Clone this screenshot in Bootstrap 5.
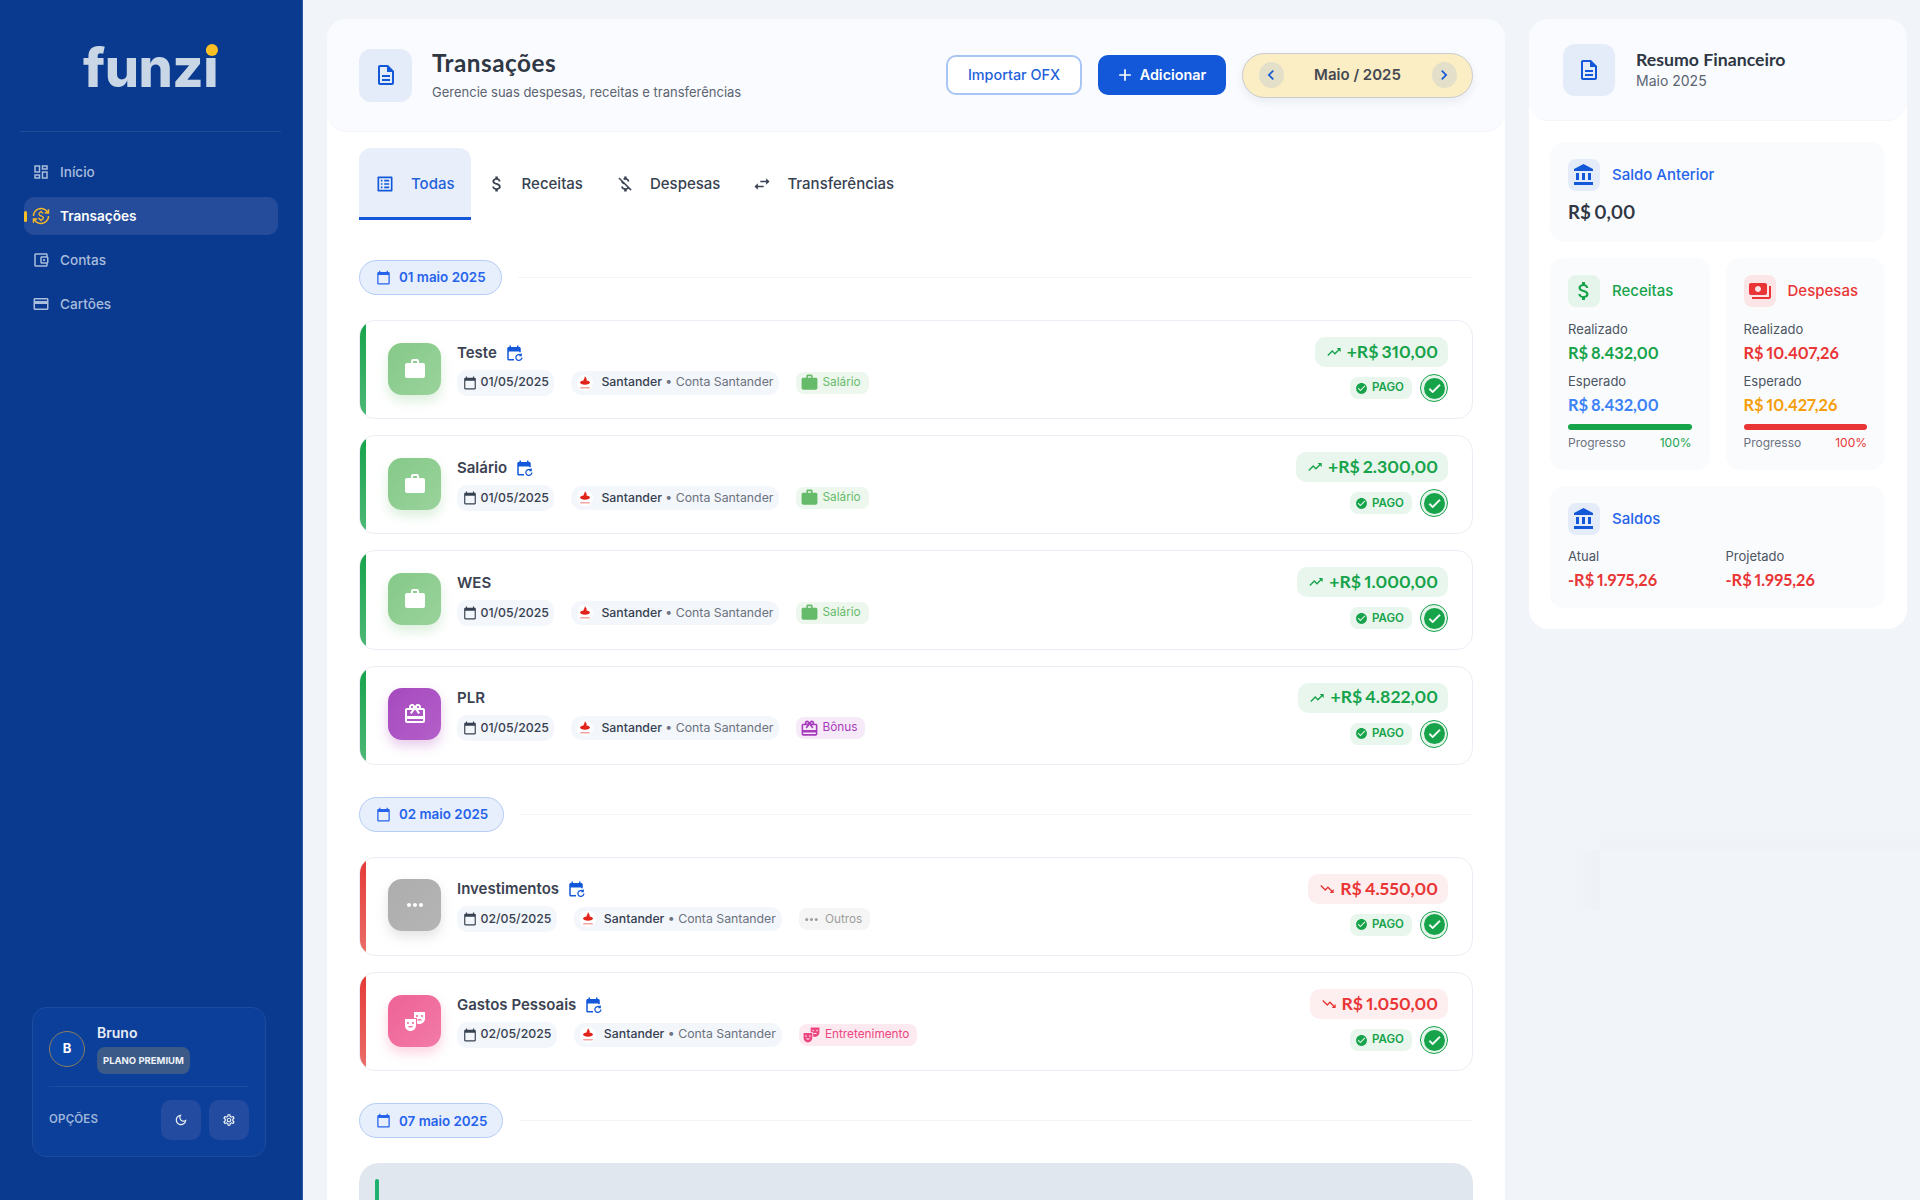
<!DOCTYPE html>
<html lang="pt-BR">
<head>
<meta charset="utf-8">
<title>Funzi - Transações</title>
<link href="https://cdn.jsdelivr.net/npm/bootstrap@5.3.0/dist/css/bootstrap.min.css" rel="stylesheet">
<style>
html,body{height:100%;overflow:hidden}
body{background:#f1f4f9;font-family:Inter,"Liberation Sans",sans-serif;color:#374151;position:relative}
.hfont{font-family:Lato,Inter,sans-serif;font-variant-numeric:proportional-nums;word-spacing:-1.2px}
.ic{fill:currentColor;flex:none;display:block}
.shell{height:1200px}
.side{width:303px;flex:none;background:#0a3a8f;border-right:1px solid #2a5aa6;padding:0 24px 43px}
.logo-wrap{height:132px;padding-top:33px;border-bottom:1px solid rgba(255,255,255,.09);margin-left:-4px;margin-right:-3px}
.logo-txt{font-size:54px;font-weight:800;line-height:70px;color:#c9d6e6;letter-spacing:-.5px;position:relative;display:inline-block}
.logo-dot{position:absolute;right:0;top:11px;width:12px;height:12px;border-radius:50%;background:#fbbf24}
.side-nav{margin-top:21px;gap:6px}
.sn-item{height:38px;padding:0 0 0 8px;gap:10px;border-radius:10px;color:#a9bddd;font-size:13.6px;font-weight:500;text-decoration:none;position:relative}
.sn-item.on{background:#244c9b;color:#fff;font-weight:600}
.sn-item.on .ic{color:#f5b72a}
.sn-bar{position:absolute;left:0;top:14px;width:3px;height:11px;background:#fbbf24;border-radius:2px}
.ucard{margin:auto 12px 0 8px;background:#0c3f99;border:1px solid #1c4b9f;border-radius:14px;padding:16px}
.uavatar{width:36px;height:36px;border-radius:50%;background:#0d47a8;border:1px solid #8b7f5e;color:#fff;font-weight:700;font-size:13px}
.uname{font-size:14px;font-weight:600;color:#e8edf5;line-height:17px}
.ubadge{display:inline-block;background:#3b5a87;color:#eef2f8;border-radius:8px;font-size:9.5px;font-weight:700;height:27px;line-height:27px;padding:0 6px;margin-top:6px}
.uline{border-top:1px solid #1c4b9f;margin:12px 0 13px}
.uopt{font-size:11.5px;font-weight:600;color:#9eb6da;letter-spacing:.2px}
.ubtn{width:40px;height:40px;border-radius:10px;background:#234ca0;border:0;color:#eef2f8;padding:0}
.content{padding:19px 13px 0 24px;gap:24px;min-width:0}
.panel-main{width:1178px;flex:none;background:#fff;border-radius:20px 20px 0 0;min-height:1181px}
.phead{background:#fafbfe;border-radius:20px;height:113px;padding:0 32px;gap:20px;border-bottom:1px solid #f3f5f9}
.ptile{width:53px;height:53px;border-radius:12px;background:#e5ecf9;color:#1258d8}
.ptitle{font-size:24.3px;letter-spacing:.5px;font-weight:700;color:#2f3744;line-height:28px}
.psub{font-size:13px;color:#5b6472;line-height:18px;margin-top:6px}
.b-ofx{width:136px;height:40px;border:2px solid #a9c5f5;border-radius:10px;color:#1f62da;background:#fff;font-size:14.4px;font-weight:500;padding:0}
.b-add{width:128px;height:40px;border:0;border-radius:10px;background:#1258d8;color:#fff;font-size:14.4px;font-weight:600;padding:0 3px 0 0;gap:5px}
.mpill{width:231px;height:45px;border-radius:24px;background:#fbeec4;border:1.5px solid #cacccd;box-shadow:0 4px 10px rgba(15,40,90,.07);padding:0 15.5px}
.mbtn{width:25px;height:26px;border-radius:50%;background:#e3dfc8;color:#1258d8;border:0;padding:0}
.mtxt{font-size:15px;font-weight:600;color:#454852}
.tabsx{padding:16px 32px 0;flex-wrap:nowrap}
.tabx{height:72px;padding:3px 16px 0;gap:15px;font-size:15px;font-weight:500;color:#374151;border-radius:12px 12px 0 0;border-bottom:3px solid transparent;text-decoration:none}
.tabx.on{gap:16px;background:#e9effa;color:#1f62da;border-bottom-color:#1258d8}
.tabx.on .ic{color:#1258d8}
.list{padding:40px 32px 0}
.dhead{gap:16px;margin-bottom:25px}
.dpill{height:35px;padding:0 15px 0 16px;gap:8px;border:1.5px solid #b5cdf5;background:#e7eefc;border-radius:18px;color:#2563eb;font-size:13.4px;font-weight:600;white-space:nowrap}
.dline{height:1.5px;background:#f2f4f8;flex:1}
.rows{gap:16px;margin-bottom:32px}
.trow{height:99.2px;border:1.5px solid #eaeef4;border-radius:16px;padding:0 24px 0 28px;background:#fff;position:relative;overflow:hidden}
.tbar{position:absolute;left:0;top:0;bottom:0;width:6px}
.g-bar{background:linear-gradient(#16a34a,#4fb877)}
.r-bar{background:linear-gradient(#e53935,#ea6f6a)}
.ttile{width:53px;height:52px;border-radius:14px;color:#fff;margin:0 16px 2px 0;flex:none}
.tt-g{background:linear-gradient(135deg,#85c988,#9ad39c);box-shadow:0 6px 12px rgba(129,199,132,.28)}
.tt-p{background:linear-gradient(135deg,#a64abf,#b45fc9);box-shadow:0 6px 12px rgba(171,71,188,.28)}
.tt-x{background:linear-gradient(135deg,#adadad,#b5b5b5);box-shadow:0 6px 12px rgba(158,158,158,.28)}
.tt-k{background:linear-gradient(135deg,#ee6295,#f27ba8);box-shadow:0 6px 12px rgba(240,98,146,.28)}
.tname{font-size:15px;font-weight:600;color:#3b4252;line-height:22px;gap:8px;margin-top:-2px;margin-bottom:6px}
.tname .ic{color:#1258d8}
.chips{gap:17px}
.cdate{height:26px;padding:0 5.5px;gap:4px;border-radius:10px;background:#f3f6fa;font-size:12.3px;font-weight:500;color:#374151}
.cacct{height:24px;padding:0 6px;border-radius:11px;background:#f3f6fa;font-size:12.3px;white-space:nowrap}
.clogo{width:16px;height:16px;border-radius:50%;background:#fff;margin-right:8px;flex:none}
.cacct b{font-weight:500;color:#374151}
.cacct span{color:#6b7280}
.ccat{height:22px;padding:0 8px 0 3.5px;gap:3.5px;border-radius:8px;font-size:11.8px}
.cc-g{background:#edf7ee;color:#66bb6a}
.cc-p{background:#f6eaf9;color:#a63bbb}
.cc-x{background:#f5f5f5;color:#9e9e9e}
.cc-k{background:#fdeaf1;color:#ec4580}
.tval{height:30px;border-radius:10px;padding:0 10px 0 11px;gap:5px;font-size:17.6px;font-weight:700;white-space:nowrap}
.tv-g{background:#e9f6ee;color:#16a34a}
.tv-r{background:#fdeeef;color:#e93535}
.tstat{margin-top:7px;gap:8px}
.pago{width:62px;height:22px;border-radius:8px;background:#e8f6ed;color:#16a34a;font-size:11.5px;font-weight:600;gap:4px;padding-left:5px}
.chk{width:28px;height:28px;border-radius:50%;border:1.5px solid #16a34a;background:#e6f5eb;padding:2.5px}
.chk i{display:flex;width:100%;height:100%;border-radius:50%;background:#16a34a;color:#fff;align-items:center;justify-content:center}
.ghost{height:60px;background:#e1e7ef;border-radius:20px 20px 0 0;padding:16px 0 0 16px}
.ghost i{display:block;width:4px;height:40px;border-radius:3px;background:#1eb06e}
.panel-side{width:378px;flex:none;background:#fff;border-radius:20px;height:610px}
.shead{background:#fafbfe;border-radius:20px;height:102px;padding:0 34px;gap:21px;border-bottom:1px solid #f3f5f9}
.stile{width:52px;height:52px;border-radius:12px;background:#e5ecf9;color:#1258d8}
.stitle{font-size:17.7px;font-weight:700;color:#2f3744;line-height:22px;word-spacing:0}
.ssub{font-size:14px;color:#5b6472;line-height:20px}
.sbody{padding:21px 22px 21px 21px;gap:16px}
.scard{background:#fafbfd;border-radius:14px;padding:17px 18px 18px}
.sic{width:32px;height:32px;border-radius:8px;flex:none}
.si-b{background:#e5ecf9;color:#1258d8}
.si-g{background:#e6f5eb;color:#16a34a}
.si-r{background:#fbe5e7;color:#e93535}
.slabel{font-size:15px;font-weight:500;gap:12px}
.sl-b{color:#2563eb}.sl-g{color:#16a34a}.sl-r{color:#e93535}
.szero{font-size:18.6px;font-weight:700;color:#2f3744;line-height:24px;margin-top:9px}
.skey{font-size:13px;color:#4b5563;line-height:20px}
.skey.k1{margin-top:12px}.skey.k2{margin-top:8px}
.sval{font-size:16.4px;font-weight:700;line-height:20px;margin-top:4px;white-space:nowrap}
.c-g{color:#16a34a}.c-r{color:#e93535}.c-b{color:#3b82f6}.c-o{color:#f59e0b}
.sbarx{height:6px;margin-top:9px;border-radius:3px}
.sbarx.bg1{background:#16a34a}.sbarx.bg2{background:#e93535}
.sprog{font-size:12px;line-height:18px;margin-top:4px;color:#6b7280}
.sgrid{display:grid;grid-template-columns:1fr 1fr;gap:16px;margin-top:11px}
.fshade{position:absolute;left:1600px;top:825px;right:0;height:24px;background:linear-gradient(to bottom,rgba(226,228,232,0),rgba(226,228,232,.18));pointer-events:none}
.fshade::after{content:"";position:absolute;left:-30px;top:25px;width:30px;height:60px;background:linear-gradient(to right,rgba(226,228,232,0),rgba(226,228,232,.2))}
</style>
</head>
<body>
<svg width="0" height="0" class="position-absolute">
<symbol id="i-doc" viewBox="0 0 24 24"><path d="M8 16h8v2H8zm0-4h8v2H8zm6-10H6c-1.1 0-2 .9-2 2v16c0 1.1.89 2 1.99 2H18c1.1 0 2-.9 2-2V8l-6-6zm4 18H6V4h7v5h5v11z"/></symbol>
<symbol id="i-list" viewBox="0 0 24 24"><path d="M19 5v14H5V5h14m1.1-2H3.9c-.5 0-.9.4-.9.9v16.2c0 .4.4.9.9.9h16.2c.4 0 .9-.5.9-.9V3.9c0-.5-.5-.9-.9-.9zM11 7h6v2h-6V7zm0 4h6v2h-6v-2zm0 4h6v2h-6zM7 7h2v2H7zm0 4h2v2H7zm0 4h2v2H7z"/></symbol>
<symbol id="i-money" viewBox="0 0 24 24"><path d="M11.8 10.9c-2.27-.59-3-1.2-3-2.15 0-1.09 1.01-1.85 2.7-1.85 1.78 0 2.44.85 2.5 2.1h2.21c-.07-1.72-1.12-3.3-3.21-3.81V3h-3v2.16c-1.94.42-3.5 1.68-3.5 3.61 0 2.31 1.91 3.46 4.7 4.13 2.5.6 3 1.48 3 2.41 0 .69-.49 1.79-2.7 1.79-2.06 0-2.87-.92-2.98-2.1h-2.2c.12 2.19 1.76 3.42 3.68 3.83V21h3v-2.15c1.95-.37 3.5-1.5 3.5-3.55 0-2.84-2.43-3.81-4.7-4.4z"/></symbol>
<symbol id="i-moneyoff" viewBox="0 0 24 24"><path d="M12.5 6.9c1.78 0 2.44.85 2.5 2.1h2.21c-.07-1.72-1.12-3.3-3.21-3.81V3h-3v2.16c-.53.12-1.03.3-1.48.54l1.47 1.47c.41-.17.91-.27 1.51-.27zM5.33 4.06L4.06 5.33 7.5 8.77c0 2.08 1.56 3.21 3.91 3.91l3.51 3.51c-.34.48-1.05.91-2.42.91-2.06 0-2.87-.92-2.98-2.1h-2.2c.12 2.19 1.76 3.42 3.68 3.83V21h3v-2.15c.96-.18 1.83-.55 2.46-1.12l2.22 2.22 1.27-1.27L5.33 4.06z"/></symbol>
<symbol id="i-swap" viewBox="0 0 24 24"><path d="M6.99 11L3 15l3.99 4v-3H14v-2H6.99v-3zM21 9l-3.99-4v3H10v2h7.01v3L21 9z"/></symbol>
<symbol id="i-cal" viewBox="0 0 24 24"><path d="M20 3h-1V1h-2v2H7V1H5v2H4c-1.1 0-2 .9-2 2v16c0 1.1.9 2 2 2h16c1.1 0 2-.9 2-2V5c0-1.1-.9-2-2-2zm0 18H4V8h16v13z"/></symbol>
<symbol id="i-rep" viewBox="0 0 24 24"><path d="M21 11V6c0-1.1-.9-2-2-2h-1V2h-2v2H8V2H6v2H5c-1.1 0-2 .9-2 2v14c0 1.1.9 2 2 2h7v-2H5V10h14v1h2z"/><path d="M22.5 18a4 4 0 1 1-1.3-3M21.6 12.8v2.6H19" fill="none" stroke="currentColor" stroke-width="1.7"/></symbol>
<symbol id="i-work" viewBox="0 0 24 24"><path d="M20 6h-4V4c0-1.11-.89-2-2-2h-4c-1.11 0-2 .89-2 2v2H4c-1.11 0-1.99.89-1.99 2L2 19c0 1.11.89 2 2 2h16c1.11 0 2-.89 2-2V8c0-1.11-.89-2-2-2zm-6 0h-4V4h4v2z"/></symbol>
<symbol id="i-gift" viewBox="0 0 24 24"><path d="M20 6h-2.18c.11-.31.18-.65.18-1 0-1.66-1.34-3-3-3-1.05 0-1.96.54-2.5 1.35l-.5.67-.5-.68C10.96 2.54 10.05 2 9 2 7.34 2 6 3.34 6 5c0 .35.07.69.18 1H4c-1.11 0-1.99.89-1.99 2L2 19c0 1.11.89 2 2 2h16c1.11 0 2-.89 2-2V8c0-1.11-.89-2-2-2zm-5-2c.55 0 1 .45 1 1s-.45 1-1 1-1-.45-1-1 .45-1 1-1zM9 4c.55 0 1 .45 1 1s-.45 1-1 1-1-.45-1-1 .45-1 1-1zm11 15H4v-2h16v2zm0-5H4V8h5.08L7 10.83 8.62 12 11 8.76l1-1.36 1 1.36L15.38 12 17 10.83 14.92 8H20v6z"/></symbol>
<symbol id="i-more" viewBox="0 0 24 24"><path d="M6 10c-1.1 0-2 .9-2 2s.9 2 2 2 2-.9 2-2-.9-2-2-2zm12 0c-1.1 0-2 .9-2 2s.9 2 2 2 2-.9 2-2-.9-2-2-2zm-6 0c-1.1 0-2 .9-2 2s.9 2 2 2 2-.9 2-2-.9-2-2-2z"/></symbol>
<symbol id="i-mask" viewBox="0 0 24 24"><path d="M2 16.5C2 19.54 4.46 22 7.5 22s5.5-2.46 5.5-5.5V10H2v6.5zm5.5 2C6.12 18.5 5 17.83 5 17h5c0 .83-1.12 1.5-2.5 1.5zM10 13c.55 0 1 .45 1 1s-.45 1-1 1-1-.45-1-1 .45-1 1-1zm-5 0c.55 0 1 .45 1 1s-.45 1-1 1-1-.45-1-1 .45-1 1-1z"/><path d="M11 3v6h3v2.5c0-.83 1.12-1.5 2.5-1.5s2.5.67 2.5 1.5h-5V14.39c.75.38 1.6.61 2.5.61 3.04 0 5.5-2.46 5.5-5.5V3H11zm3 5.08c-.55 0-1-.45-1-1s.45-1 1-1 1 .45 1 1-.45 1-1 1zm5 0c-.55 0-1-.45-1-1s.45-1 1-1 1 .45 1 1-.45 1-1 1z"/></symbol>
<symbol id="i-up" viewBox="0 0 24 24"><path d="M16 6l2.29 2.29-4.88 4.88-4-4L2 16.59 3.41 18l6-6 4 4 6.3-6.29L22 12V6z"/></symbol>
<symbol id="i-down" viewBox="0 0 24 24"><path d="M16 18l2.29-2.29-4.88-4.88-4 4L2 7.41 3.41 6l6 6 4-4 6.3 6.29L22 12v6z"/></symbol>
<symbol id="i-ok" viewBox="0 0 24 24"><path d="M12 2C6.48 2 2 6.48 2 12s4.48 10 10 10 10-4.48 10-10S17.52 2 12 2zm-2 15l-5-5 1.41-1.41L10 14.17l7.59-7.59L19 8l-9 9z"/></symbol>
<symbol id="i-check" viewBox="0 0 24 24"><path d="M9 16.17L4.83 12l-1.42 1.41L9 19 21 7l-1.41-1.41z" stroke="currentColor" stroke-width="1.2"/></symbol>
<symbol id="i-bank" viewBox="0 0 24 24"><path d="M4 10v7h3v-7H4zm6 0v7h3v-7h-3zM2 22h19v-3H2v3zm14-12v7h3v-7h-3zm-4.5-9L2 6v2h19V6l-9.5-5z"/></symbol>
<symbol id="i-pay" viewBox="0 0 24 24"><path d="M19 14V6c0-1.1-.9-2-2-2H3c-1.1 0-2 .9-2 2v8c0 1.1.9 2 2 2h14c1.1 0 2-.9 2-2zm-9-1c-1.66 0-3-1.34-3-3s1.34-3 3-3 3 1.34 3 3-1.34 3-3 3zm13-6v11c0 1.1-.9 2-2 2H4v-2h17V7h2z"/></symbol>
<symbol id="i-add" viewBox="0 0 24 24"><path d="M19 13h-6v6h-2v-6H5v-2h6V5h2v6h6v2z"/></symbol>
<symbol id="i-left" viewBox="0 0 24 24"><path d="M15.41 7.41L14 6l-6 6 6 6 1.41-1.41L10.83 12z"/></symbol>
<symbol id="i-right" viewBox="0 0 24 24"><path d="M10 6L8.59 7.41 13.17 12l-4.58 4.59L10 18l6-6z"/></symbol>
<symbol id="i-dash" viewBox="0 0 24 24"><path d="M19 5v2h-4V5h4M9 5v6H5V5h4m10 8v6h-4v-6h4M9 17v2H5v-2h4M21 3h-8v6h8V3zM11 3H3v10h8V3zm10 8h-8v10h8V11zm-10 4H3v6h8v-6z"/></symbol>
<symbol id="i-exch" viewBox="0 0 24 24"><path d="M12.89 11.1c-1.78-.59-2.64-.96-2.64-1.9 0-1.02 1.11-1.39 1.81-1.39 1.31 0 1.79.99 1.9 1.34l1.58-.67c-.15-.45-.82-1.92-2.54-2.24V5h-2v1.26c-2.48.56-2.49 2.86-2.49 2.96 0 2.27 2.25 2.91 3.35 3.31 1.58.56 2.28 1.07 2.28 2.03 0 1.13-1.05 1.61-1.98 1.61-1.82 0-2.34-1.87-2.4-2.09l-1.66.67c.63 2.19 2.28 2.78 3.02 2.96V19h2v-1.24c.52-.09 2.9-.57 2.9-3.02 0-1.3-.57-2.44-3.11-3.34zM3 21H1v-6h6v2H4.52c1.61 2.41 4.36 4 7.48 4 4.97 0 9-4.03 9-9h2c0 6.08-4.92 11-11 11-3.72 0-7.01-1.85-9-4.67V21zm-2-9C1 5.92 5.92 1 12 1c3.72 0 7.01 1.85 9 4.67V3h2v6h-6V7h2.48C17.87 4.59 15.12 3 12 3c-4.97 0-9 4.03-9 9H1z"/></symbol>
<symbol id="i-wallet" viewBox="0 0 24 24"><path d="M21 7.28V5c0-1.1-.9-2-2-2H5c-1.11 0-2 .9-2 2v14c0 1.1.89 2 2 2h14c1.1 0 2-.9 2-2v-2.28c.59-.35 1-.98 1-1.72V9c0-.74-.41-1.38-1-1.72zM20 9v6h-7V9h7zM5 19V5h14v2h-6c-1.1 0-2 .9-2 2v6c0 1.1.9 2 2 2h6v2H5z"/><circle cx="16" cy="12" r="1.5"/></symbol>
<symbol id="i-card" viewBox="0 0 24 24"><path d="M20 4H4c-1.11 0-1.99.89-1.99 2L2 18c0 1.11.89 2 2 2h16c1.11 0 2-.89 2-2V6c0-1.11-.89-2-2-2zm0 14H4v-6h16v6zm0-10H4V6h16v2z"/></symbol>
<symbol id="i-moon" viewBox="0 0 24 24"><path d="M9.37 5.51c-.18.64-.27 1.31-.27 1.99 0 4.08 3.32 7.4 7.4 7.4.68 0 1.35-.09 1.99-.27C17.45 17.19 14.93 19 12 19c-3.86 0-7-3.14-7-7 0-2.93 1.81-5.45 4.37-6.49zM12 3c-4.97 0-9 4.03-9 9s4.03 9 9 9 9-4.03 9-9c0-.46-.04-.92-.1-1.36-.98 1.37-2.58 2.26-4.4 2.26-2.98 0-5.4-2.42-5.4-5.4 0-1.81.89-3.42 2.26-4.4-.44-.06-.9-.1-1.36-.1z"/></symbol>
<symbol id="i-gear" viewBox="0 0 24 24"><path d="M19.43 12.98c.04-.32.07-.64.07-.98 0-.34-.03-.66-.07-.98l2.11-1.65c.19-.15.24-.42.12-.64l-2-3.46c-.09-.16-.26-.25-.44-.25-.06 0-.12.01-.17.03l-2.49 1c-.52-.4-1.08-.73-1.69-.98l-.38-2.65C14.46 2.18 14.25 2 14 2h-4c-.25 0-.46.18-.49.42l-.38 2.65c-.61.25-1.17.59-1.69.98l-2.49-1c-.06-.02-.12-.03-.18-.03-.17 0-.34.09-.43.25l-2 3.46c-.13.22-.07.49.12.64l2.11 1.65c-.04.32-.07.65-.07.98 0 .33.03.66.07.98l-2.11 1.65c-.19.15-.24.42-.12.64l2 3.46c.09.16.26.25.44.25.06 0 .12-.01.17-.03l2.49-1c.52.4 1.08.73 1.69.98l.38 2.65c.03.24.24.42.49.42h4c.25 0 .46-.18.49-.42l.38-2.65c.61-.25 1.17-.59 1.69-.98l2.49 1c.06.02.12.03.18.03.17 0 .34-.09.43-.25l2-3.46c.12-.22.07-.49-.12-.64l-2.11-1.65zm-1.98-1.71c.04.31.05.52.05.73 0 .21-.02.43-.05.73l-.14 1.13.89.7 1.08.84-.7 1.21-1.27-.51-1.04-.42-.9.68c-.43.32-.84.56-1.25.73l-1.06.43-.16 1.13-.2 1.35h-1.4l-.19-1.35-.16-1.13-1.06-.43c-.43-.18-.83-.41-1.23-.71l-.91-.7-1.06.43-1.27.51-.7-1.21 1.08-.84.89-.7-.14-1.13c-.03-.31-.05-.54-.05-.74s.02-.43.05-.73l.14-1.13-.89-.7-1.08-.84.7-1.21 1.27.51 1.04.42.9-.68c.43-.32.84-.56 1.25-.73l1.06-.43.16-1.13.2-1.35h1.39l.19 1.35.16 1.13 1.06.43c.43.18.83.41 1.23.71l.91.7 1.06-.43 1.27-.51.7 1.21-1.07.85-.89.7.14 1.13zM12 8c-2.21 0-4 1.79-4 4s1.79 4 4 4 4-1.79 4-4-1.79-4-4-4zm0 6c-1.1 0-2-.9-2-2s.9-2 2-2 2 .9 2 2-.9 2-2 2z"/></symbol>
<symbol id="i-sant" viewBox="0 0 16 16"><path fill="#e2231a" d="M8 1c.5 1.4 1.7 2 1.7 3.3 0 .4-.1.8-.3 1.1 2 .3 3.6 1.1 3.6 2.2 0 1.2-2.2 2.2-5 2.2s-5-1-5-2.2c0-1.1 1.6-1.9 3.6-2.2C6.3 4.9 7.6 3.4 8 1z"/><rect x="3.2" y="12.2" width="9.6" height="1.2" fill="#e2231a" opacity=".5"/></symbol>
</svg>

<div class="shell d-flex">
  <aside class="side d-flex flex-column">
    <div class="logo-wrap text-center"><span class="logo-txt">funzi<span class="logo-dot"></span></span></div>
    <nav class="side-nav d-flex flex-column">
      <a class="sn-item d-flex align-items-center" href="#"><svg class="ic" width="18" height="18"><use href="#i-dash"/></svg>Início</a>
      <a class="sn-item on d-flex align-items-center" href="#"><span class="sn-bar"></span><svg class="ic" width="18" height="18"><use href="#i-exch"/></svg>Transações</a>
      <a class="sn-item d-flex align-items-center" href="#"><svg class="ic" width="18" height="18"><use href="#i-wallet"/></svg>Contas</a>
      <a class="sn-item d-flex align-items-center" href="#"><svg class="ic" width="18" height="18"><use href="#i-card"/></svg>Cartões</a>
    </nav>
    <div class="ucard">
      <div class="d-flex gap-2 align-items-center">
        <div class="uavatar d-flex align-items-center justify-content-center me-1">B</div>
        <div><div class="uname">Bruno</div><span class="ubadge">PLANO PREMIUM</span></div>
      </div>
      <div class="uline"></div>
      <div class="d-flex align-items-center justify-content-between">
        <span class="uopt">OPÇÕES</span>
        <div class="d-flex gap-2">
          <button class="ubtn d-flex align-items-center justify-content-center"><svg class="ic" width="14" height="14"><use href="#i-moon"/></svg></button>
          <button class="ubtn d-flex align-items-center justify-content-center"><svg class="ic" width="14" height="14"><use href="#i-gear"/></svg></button>
        </div>
      </div>
    </div>
  </aside>

  <div class="content d-flex align-items-start flex-grow-1">
    <main class="panel-main">
      <header class="phead d-flex align-items-center">
        <div class="ptile d-flex align-items-center justify-content-center"><svg class="ic" width="24" height="24"><use href="#i-doc"/></svg></div>
        <div class="flex-grow-1">
          <div class="ptitle hfont">Transações</div>
          <div class="psub">Gerencie suas despesas, receitas e transferências</div>
        </div>
        <div class="d-flex align-items-center gap-3">
          <button class="b-ofx btn">Importar OFX</button>
          <button class="b-add btn d-flex align-items-center justify-content-center"><svg class="ic" width="20" height="20"><use href="#i-add"/></svg>Adicionar</button>
          <div class="mpill d-flex align-items-center justify-content-between">
            <button class="mbtn d-flex align-items-center justify-content-center"><svg class="ic" width="20" height="20"><use href="#i-left"/></svg></button>
            <span class="mtxt">Maio / 2025</span>
            <button class="mbtn d-flex align-items-center justify-content-center"><svg class="ic" width="20" height="20"><use href="#i-right"/></svg></button>
          </div>
        </div>
      </header>

      <div class="nav tabsx">
        <a class="tabx on d-flex align-items-center" href="#"><svg class="ic" width="20" height="20"><use href="#i-list"/></svg>Todas</a>
        <a class="tabx d-flex align-items-center" href="#"><svg class="ic" width="20" height="20"><use href="#i-money"/></svg>Receitas</a>
        <a class="tabx d-flex align-items-center" href="#"><svg class="ic" width="20" height="20"><use href="#i-moneyoff"/></svg>Despesas</a>
        <a class="tabx d-flex align-items-center" href="#"><svg class="ic" width="20" height="20"><use href="#i-swap"/></svg>Transferências</a>
      </div>

      <div class="list">
        <div class="dhead d-flex align-items-center"><div class="dpill d-flex align-items-center"><svg class="ic" width="15" height="15"><use href="#i-cal"/></svg>01 maio 2025</div><div class="dline"></div></div>
        <div class="rows d-flex flex-column">

          <div class="trow d-flex align-items-center justify-content-between"><span class="tbar g-bar"></span>
            <div class="d-flex align-items-center">
              <div class="ttile tt-g d-flex align-items-center justify-content-center"><svg class="ic" width="24" height="24"><use href="#i-work"/></svg></div>
              <div>
                <div class="tname d-flex align-items-center">Teste<svg class="ic" width="18" height="18"><use href="#i-rep"/></svg></div>
                <div class="chips d-flex align-items-center">
                  <span class="cdate d-flex align-items-center"><svg class="ic" width="14" height="14"><use href="#i-cal"/></svg>01/05/2025</span>
                  <span class="cacct d-flex align-items-center"><span class="clogo d-flex"><svg width="16" height="16"><use href="#i-sant"/></svg></span><b>Santander</b><span>&nbsp;• Conta Santander</span></span>
                  <span class="ccat cc-g d-flex align-items-center"><svg class="ic" width="19" height="19"><use href="#i-work"/></svg>Salário</span>
                </div>
              </div>
            </div>
            <div class="d-flex flex-column align-items-end">
              <div class="tval tv-g hfont d-flex align-items-center"><svg class="ic" width="16" height="16"><use href="#i-up"/></svg>+R$ 310,00</div>
              <div class="tstat d-flex align-items-center"><span class="pago d-flex align-items-center"><svg class="ic" width="13" height="13"><use href="#i-ok"/></svg>PAGO</span><span class="chk"><i><svg class="ic" width="15" height="15"><use href="#i-check"/></svg></i></span></div>
            </div>
          </div>

          <div class="trow d-flex align-items-center justify-content-between"><span class="tbar g-bar"></span>
            <div class="d-flex align-items-center">
              <div class="ttile tt-g d-flex align-items-center justify-content-center"><svg class="ic" width="24" height="24"><use href="#i-work"/></svg></div>
              <div>
                <div class="tname d-flex align-items-center">Salário<svg class="ic" width="18" height="18"><use href="#i-rep"/></svg></div>
                <div class="chips d-flex align-items-center">
                  <span class="cdate d-flex align-items-center"><svg class="ic" width="14" height="14"><use href="#i-cal"/></svg>01/05/2025</span>
                  <span class="cacct d-flex align-items-center"><span class="clogo d-flex"><svg width="16" height="16"><use href="#i-sant"/></svg></span><b>Santander</b><span>&nbsp;• Conta Santander</span></span>
                  <span class="ccat cc-g d-flex align-items-center"><svg class="ic" width="19" height="19"><use href="#i-work"/></svg>Salário</span>
                </div>
              </div>
            </div>
            <div class="d-flex flex-column align-items-end">
              <div class="tval tv-g hfont d-flex align-items-center"><svg class="ic" width="16" height="16"><use href="#i-up"/></svg>+R$ 2.300,00</div>
              <div class="tstat d-flex align-items-center"><span class="pago d-flex align-items-center"><svg class="ic" width="13" height="13"><use href="#i-ok"/></svg>PAGO</span><span class="chk"><i><svg class="ic" width="15" height="15"><use href="#i-check"/></svg></i></span></div>
            </div>
          </div>

          <div class="trow d-flex align-items-center justify-content-between"><span class="tbar g-bar"></span>
            <div class="d-flex align-items-center">
              <div class="ttile tt-g d-flex align-items-center justify-content-center"><svg class="ic" width="24" height="24"><use href="#i-work"/></svg></div>
              <div>
                <div class="tname d-flex align-items-center">WES</div>
                <div class="chips d-flex align-items-center">
                  <span class="cdate d-flex align-items-center"><svg class="ic" width="14" height="14"><use href="#i-cal"/></svg>01/05/2025</span>
                  <span class="cacct d-flex align-items-center"><span class="clogo d-flex"><svg width="16" height="16"><use href="#i-sant"/></svg></span><b>Santander</b><span>&nbsp;• Conta Santander</span></span>
                  <span class="ccat cc-g d-flex align-items-center"><svg class="ic" width="19" height="19"><use href="#i-work"/></svg>Salário</span>
                </div>
              </div>
            </div>
            <div class="d-flex flex-column align-items-end">
              <div class="tval tv-g hfont d-flex align-items-center"><svg class="ic" width="16" height="16"><use href="#i-up"/></svg>+R$ 1.000,00</div>
              <div class="tstat d-flex align-items-center"><span class="pago d-flex align-items-center"><svg class="ic" width="13" height="13"><use href="#i-ok"/></svg>PAGO</span><span class="chk"><i><svg class="ic" width="15" height="15"><use href="#i-check"/></svg></i></span></div>
            </div>
          </div>

          <div class="trow d-flex align-items-center justify-content-between"><span class="tbar g-bar"></span>
            <div class="d-flex align-items-center">
              <div class="ttile tt-p d-flex align-items-center justify-content-center"><svg class="ic" width="24" height="24"><use href="#i-gift"/></svg></div>
              <div>
                <div class="tname d-flex align-items-center">PLR</div>
                <div class="chips d-flex align-items-center">
                  <span class="cdate d-flex align-items-center"><svg class="ic" width="14" height="14"><use href="#i-cal"/></svg>01/05/2025</span>
                  <span class="cacct d-flex align-items-center"><span class="clogo d-flex"><svg width="16" height="16"><use href="#i-sant"/></svg></span><b>Santander</b><span>&nbsp;• Conta Santander</span></span>
                  <span class="ccat cc-p d-flex align-items-center"><svg class="ic" width="19" height="19"><use href="#i-gift"/></svg>Bônus</span>
                </div>
              </div>
            </div>
            <div class="d-flex flex-column align-items-end">
              <div class="tval tv-g hfont d-flex align-items-center"><svg class="ic" width="16" height="16"><use href="#i-up"/></svg>+R$ 4.822,00</div>
              <div class="tstat d-flex align-items-center"><span class="pago d-flex align-items-center"><svg class="ic" width="13" height="13"><use href="#i-ok"/></svg>PAGO</span><span class="chk"><i><svg class="ic" width="15" height="15"><use href="#i-check"/></svg></i></span></div>
            </div>
          </div>
        </div>

        <div class="dhead d-flex align-items-center"><div class="dpill d-flex align-items-center"><svg class="ic" width="15" height="15"><use href="#i-cal"/></svg>02 maio 2025</div><div class="dline"></div></div>
        <div class="rows d-flex flex-column">
          <div class="trow d-flex align-items-center justify-content-between"><span class="tbar r-bar"></span>
            <div class="d-flex align-items-center">
              <div class="ttile tt-x d-flex align-items-center justify-content-center"><svg class="ic" width="24" height="24"><use href="#i-more"/></svg></div>
              <div>
                <div class="tname d-flex align-items-center">Investimentos<svg class="ic" width="18" height="18"><use href="#i-rep"/></svg></div>
                <div class="chips d-flex align-items-center">
                  <span class="cdate d-flex align-items-center"><svg class="ic" width="14" height="14"><use href="#i-cal"/></svg>02/05/2025</span>
                  <span class="cacct d-flex align-items-center"><span class="clogo d-flex"><svg width="16" height="16"><use href="#i-sant"/></svg></span><b>Santander</b><span>&nbsp;• Conta Santander</span></span>
                  <span class="ccat cc-x d-flex align-items-center"><svg class="ic" width="19" height="19"><use href="#i-more"/></svg>Outros</span>
                </div>
              </div>
            </div>
            <div class="d-flex flex-column align-items-end">
              <div class="tval tv-r hfont d-flex align-items-center"><svg class="ic" width="16" height="16"><use href="#i-down"/></svg>R$ 4.550,00</div>
              <div class="tstat d-flex align-items-center"><span class="pago d-flex align-items-center"><svg class="ic" width="13" height="13"><use href="#i-ok"/></svg>PAGO</span><span class="chk"><i><svg class="ic" width="15" height="15"><use href="#i-check"/></svg></i></span></div>
            </div>
          </div>

          <div class="trow d-flex align-items-center justify-content-between"><span class="tbar r-bar"></span>
            <div class="d-flex align-items-center">
              <div class="ttile tt-k d-flex align-items-center justify-content-center"><svg class="ic" width="24" height="24"><use href="#i-mask"/></svg></div>
              <div>
                <div class="tname d-flex align-items-center">Gastos Pessoais<svg class="ic" width="18" height="18"><use href="#i-rep"/></svg></div>
                <div class="chips d-flex align-items-center">
                  <span class="cdate d-flex align-items-center"><svg class="ic" width="14" height="14"><use href="#i-cal"/></svg>02/05/2025</span>
                  <span class="cacct d-flex align-items-center"><span class="clogo d-flex"><svg width="16" height="16"><use href="#i-sant"/></svg></span><b>Santander</b><span>&nbsp;• Conta Santander</span></span>
                  <span class="ccat cc-k d-flex align-items-center"><svg class="ic" width="19" height="19"><use href="#i-mask"/></svg>Entretenimento</span>
                </div>
              </div>
            </div>
            <div class="d-flex flex-column align-items-end">
              <div class="tval tv-r hfont d-flex align-items-center"><svg class="ic" width="16" height="16"><use href="#i-down"/></svg>R$ 1.050,00</div>
              <div class="tstat d-flex align-items-center"><span class="pago d-flex align-items-center"><svg class="ic" width="13" height="13"><use href="#i-ok"/></svg>PAGO</span><span class="chk"><i><svg class="ic" width="15" height="15"><use href="#i-check"/></svg></i></span></div>
            </div>
          </div>
        </div>

        <div class="dhead d-flex align-items-center"><div class="dpill d-flex align-items-center"><svg class="ic" width="15" height="15"><use href="#i-cal"/></svg>07 maio 2025</div><div class="dline"></div></div>
        <div class="ghost"><i></i></div>
      </div>
    </main>

    <aside class="panel-side">
      <div class="shead d-flex align-items-center">
        <div class="stile d-flex align-items-center justify-content-center"><svg class="ic" width="24" height="24"><use href="#i-doc"/></svg></div>
        <div><div class="stitle hfont">Resumo Financeiro</div><div class="ssub">Maio 2025</div></div>
      </div>
      <div class="sbody d-flex flex-column">
        <div class="scard">
          <div class="slabel sl-b d-flex align-items-center"><span class="sic si-b d-flex align-items-center justify-content-center"><svg class="ic" width="24" height="24"><use href="#i-bank"/></svg></span>Saldo Anterior</div>
          <div class="szero hfont">R$ 0,00</div>
        </div>
        <div class="d-flex gap-3">
          <div class="scard w-50">
            <div class="slabel sl-g d-flex align-items-center"><span class="sic si-g d-flex align-items-center justify-content-center"><svg class="ic" width="24" height="24"><use href="#i-money"/></svg></span>Receitas</div>
            <div class="skey k1">Realizado</div>
            <div class="sval hfont c-g">R$ 8.432,00</div>
            <div class="skey k2">Esperado</div>
            <div class="sval hfont c-b">R$ 8.432,00</div>
            <div class="sbarx bg1"></div>
            <div class="sprog d-flex justify-content-between"><span>Progresso</span><span class="c-g">100%</span></div>
          </div>
          <div class="scard w-50">
            <div class="slabel sl-r d-flex align-items-center"><span class="sic si-r d-flex align-items-center justify-content-center"><svg class="ic" width="24" height="24"><use href="#i-pay"/></svg></span>Despesas</div>
            <div class="skey k1">Realizado</div>
            <div class="sval hfont c-r">R$ 10.407,26</div>
            <div class="skey k2">Esperado</div>
            <div class="sval hfont c-o">R$ 10.427,26</div>
            <div class="sbarx bg2"></div>
            <div class="sprog d-flex justify-content-between"><span>Progresso</span><span class="c-r">100%</span></div>
          </div>
        </div>
        <div class="scard">
          <div class="slabel sl-b d-flex align-items-center"><span class="sic si-b d-flex align-items-center justify-content-center"><svg class="ic" width="24" height="24"><use href="#i-bank"/></svg></span>Saldos</div>
          <div class="sgrid">
            <div><div class="skey">Atual</div><div class="sval hfont c-r">-R$ 1.975,26</div></div>
            <div><div class="skey">Projetado</div><div class="sval hfont c-r">-R$ 1.995,26</div></div>
          </div>
        </div>
      </div>
    </aside>
  </div>
</div>
<div class="fshade"></div>
<script src="https://cdn.jsdelivr.net/npm/bootstrap@5.3.0/dist/js/bootstrap.bundle.min.js"></script>
</body>
</html>
